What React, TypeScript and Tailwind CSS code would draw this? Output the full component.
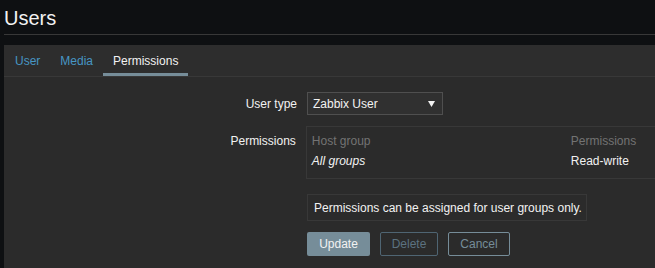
import { useState } from "react";

const tabs = ["User", "Media", "Permissions"];

export default function App() {
  const [active, setActive] = useState("Permissions");

  return (
    <div className="min-h-screen w-screen overflow-hidden bg-[#0e1012] pl-1 font-['Liberation_Sans',Arial,sans-serif] text-[12px] text-[#f2f2f2]">
      {/* Header */}
      <div className="h-[35px] border-b border-[#383838]">
        <h1 className="pt-[6px] text-[20px] leading-[24px] text-[#f2f2f2]">Users</h1>
      </div>

      {/* Form panel */}
      <div className="mt-[10px] w-[760px] bg-[#2b2b2b]">
        {/* Tabs */}
        <div className="flex h-[32px] border-b border-[#383838] bg-[#2d2d2d] pl-px">
          {tabs.map((t) => (
            <button
              key={t}
              onClick={() => setActive(t)}
              className={`h-[31px] border-b-[3px] px-[10px] pt-[4px] leading-[14px] ${
                active === t
                  ? "border-[#768d99] text-[#f2f2f2]"
                  : "border-transparent text-[#4796c4]"
              }`}
            >
              {t}
            </button>
          ))}
        </div>

        {/* Form rows */}
        <div className="pb-[12px] pt-[15px]">
          <div className="flex items-center">
            <label className="w-[303px] pr-[10px] text-right">User type</label>
            <div className="flex h-[23px] w-[136px] items-center justify-between border border-[#4f4f4f] bg-[#303030] pl-[5px] pr-[7px]">
              <span>Zabbix User</span>
              <svg width="7" height="6" viewBox="0 0 7 6">
                <path d="M0 0h7L3.5 6z" fill="#f2f2f2" />
              </svg>
            </div>
          </div>

          <div className="mt-[11px] flex">
            <label className="w-[303px] pr-[10px] pt-[6px] text-right">Permissions</label>
            <div className="h-[53px] w-[460px] border border-[#383838] px-[5px] pt-[4px]">
              <div className="flex h-[20px] items-center text-[#737373]">
                <span className="w-[259px]">Host group</span>
                <span>Permissions</span>
              </div>
              <div className="flex h-[20px] items-center">
                <span className="w-[259px] italic">All groups</span>
                <span>Read-write</span>
              </div>
            </div>
          </div>

          <div className="mt-[15px] flex">
            <div className="w-[303px]" />
            <div className="flex h-[27px] w-[280px] items-center whitespace-nowrap border border-[#383838] px-[6px]">
              Permissions can be assigned for user groups only.
            </div>
          </div>

          <div className="mt-[11px] flex">
            <div className="w-[303px]" />
            <div className="flex gap-[10px]">
              <button className="h-[24px] w-[63px] rounded-[2px] bg-[#768d99] text-[#f2f2f2]">Update</button>
              <button className="h-[24px] w-[58px] rounded-[2px] border border-[#4f6573] text-[#5c7280]">Delete</button>
              <button className="h-[24px] w-[62px] rounded-[2px] border border-[#768d99] text-[#768d99]">Cancel</button>
            </div>
          </div>
        </div>
      </div>
    </div>
  );
}
